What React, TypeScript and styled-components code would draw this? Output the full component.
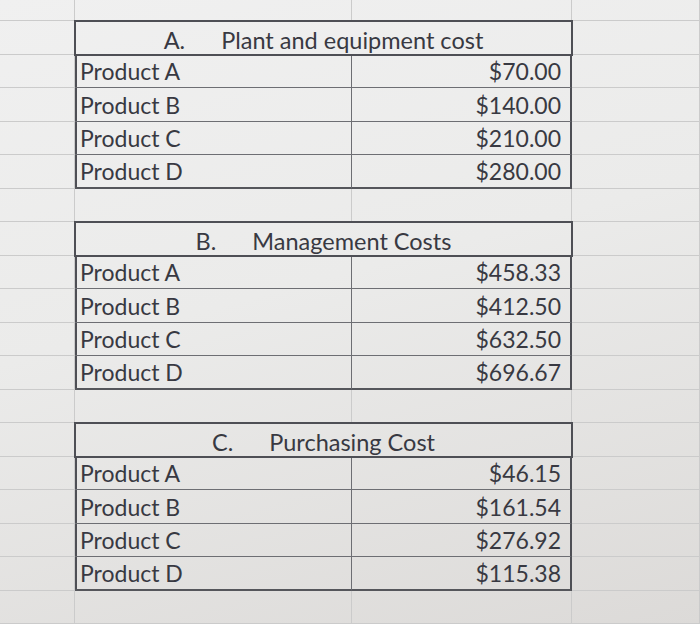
import { createGlobalStyle, styled } from "styled-components";

const GlobalStyle = createGlobalStyle`
  html, body {
    margin: 0;
    padding: 0;
    height: 100%;
    overflow: hidden;
  }
  body {
    background: linear-gradient(165deg, #f0f0f0 0%, #ebebea 45%, #dcdad8 100%);
    font-family: Lato, "Open Sans", sans-serif;
    color: #383942;
  }
`;

const Sheet = styled.div`
  display: grid;
  grid-template-columns: 75px 277px 220px 1fr;
  grid-template-rows: 21px;
  grid-auto-rows: 33.5px;
  width: 700px;
  height: 624px;
  overflow: hidden;
`;

const Cell = styled.div`
  box-sizing: border-box;
  border-right: 1px solid #cbcbcb;
  border-bottom: 1px solid #cbcbcb;
`;

const HeaderCell = styled.div`
  grid-column: span 2;
  box-sizing: border-box;
  outline: 2px solid #4e4f55;
  outline-offset: -1px;
  display: flex;
  align-items: center;
  justify-content: center;
  gap: 36px;
  font-size: 23.5px;
  padding-top: 4px;
  position: relative;
  z-index: 1;
`;

const LabelCell = styled.div<{ $last?: boolean }>`
  box-sizing: border-box;
  border-right: 1px solid #6d6e73;
  border-bottom: ${(p) => (p.$last ? "2px solid #55565b" : "1px solid #6d6e73")};
  box-shadow: inset 2px 0 0 #4e4f55;
  display: flex;
  align-items: center;
  padding-left: 5px;
  padding-top: 1px;
  font-size: 23px;
`;

const ValueCell = styled.div<{ $last?: boolean }>`
  box-sizing: border-box;
  border-right: 2px solid #4e4f55;
  border-bottom: ${(p) => (p.$last ? "2px solid #55565b" : "1px solid #6d6e73")};
  display: flex;
  align-items: center;
  justify-content: flex-end;
  padding-right: 9px;
  padding-top: 1px;
  font-size: 23px;
`;

type Table = { letter: string; title: string; values: string[] };

const tables: Table[] = [
  { letter: "A.", title: "Plant and equipment cost", values: ["$70.00", "$140.00", "$210.00", "$280.00"] },
  { letter: "B.", title: "Management Costs", values: ["$458.33", "$412.50", "$632.50", "$696.67"] },
  { letter: "C.", title: "Purchasing Cost", values: ["$46.15", "$161.54", "$276.92", "$115.38"] },
];

const products = ["Product A", "Product B", "Product C", "Product D"];

const BlankRow = () => (
  <>
    <Cell />
    <Cell />
    <Cell />
    <Cell />
  </>
);

export default function App() {
  return (
    <>
      <GlobalStyle />
      <Sheet>
        <BlankRow />
        {tables.map((t, ti) => (
          <div key={t.letter} style={{ display: "contents" }}>
            <Cell />
            <HeaderCell>
              <span>{t.letter}</span>
              <span>{t.title}</span>
            </HeaderCell>
            <Cell />
            {products.map((p, i) => (
              <div key={p} style={{ display: "contents" }}>
                <Cell />
                <LabelCell $last={i === 3}>{p}</LabelCell>
                <ValueCell $last={i === 3}>{t.values[i]}</ValueCell>
                <Cell />
              </div>
            ))}
            {ti < tables.length - 1 && <BlankRow />}
          </div>
        ))}
        <BlankRow />
      </Sheet>
    </>
  );
}
